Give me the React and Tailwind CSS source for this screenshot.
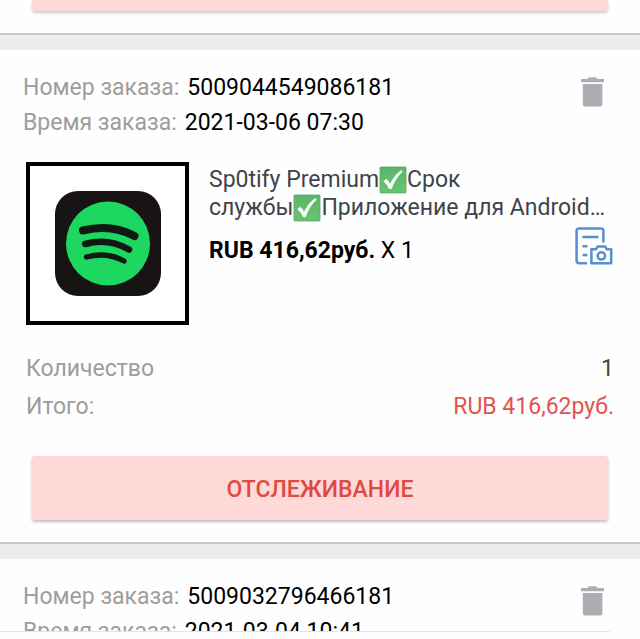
const orders = [
  {
    number: '5009044549086181',
    time: '2021-03-06 07:30',
    quantity: 1,
    price: 'RUB 416,62руб.',
  },
  {
    number: '5009032796466181',
    time: '2021-03-04 10:41',
    quantity: 1,
    price: 'RUB 416,62руб.',
  },
];

export default function App() {
  return (
    <div className="flex h-screen flex-col bg-[#fefefe] font-['Roboto','Noto_Sans',sans-serif] text-[23px] text-black">
      <main className="min-h-0 flex-1 overflow-hidden">
        <div className="border-b-2 border-[#c8c8c8] px-8 pb-[22px]">
          <div className="h-[11px] rounded-b-[3px] bg-[#fed9d7] shadow-[0_2px_3px_rgba(0,0,0,0.2)]" />
        </div>
        {orders.map((order) => (
          <OrderCard key={order.number} order={order} />
        ))}
      </main>
      <footer className="h-2 shrink-0 pr-[30px]">
        <div className="border-t border-[#e4e4e4]" />
      </footer>
    </div>
  );
}

function OrderCard({ order }) {
  return (
    <article className="border-b-2 border-[#c8c8c8]">
      <div className="h-[15px] bg-[#ececec]" />
      <header className="flex items-start justify-between pt-5 pr-9 pl-[23px] leading-[35px]">
        <div>
          <p className="flex gap-2">
            <span className="text-[#9d9d9d]">Номер заказа:</span>
            <span>{order.number}</span>
          </p>
          <p className="flex gap-2">
            <span className="text-[#9d9d9d]">Время заказа:</span>
            <span>{order.time}</span>
          </p>
        </div>
        <button type="button" aria-label="Удалить заказ" className="mt-[7px]">
          <TrashIcon />
        </button>
      </header>

      <div className="flex gap-5 pt-[22px] pr-[27px] pl-[26px]">
        <div className="grid size-[163px] shrink-0 place-items-center border-4 border-black bg-white">
          <SpotifyLogo />
        </div>
        <div className="min-w-0 flex-1 pt-1">
          <h2 className="leading-7 text-[#41434b]">
            Sp0tify Premium
            <CheckMark />
            Срок{' '}
            <span className="whitespace-nowrap">
              службы
              <CheckMark />
              Приложение
            </span>{' '}
            для Android…
          </h2>
          <div className="flex items-start justify-between pt-[5px]">
            <p className="pt-[6px] leading-[35px]">
              <strong className="font-bold">{order.price}</strong> X {order.quantity}
            </p>
            <button type="button" aria-label="Снимок заказа">
              <SnapshotIcon />
            </button>
          </div>
        </div>
      </div>

      <dl className="grid grid-cols-2 pt-[25px] pr-[26px] pl-[26px] leading-[38px]">
        <dt className="text-[#9d9d9d]">Количество</dt>
        <dd className="text-right text-[#41434b]">{order.quantity}</dd>
        <dt className="text-[#9d9d9d]">Итого:</dt>
        <dd className="text-right text-[#e25350]">{order.price}</dd>
      </dl>

      <div className="px-8 pt-[30px] pb-[22px]">
        <button
          type="button"
          className="h-16 w-full rounded-[3px] bg-[#fed9d7] pt-1 font-medium text-[#e04a41] shadow-[0_2px_3px_rgba(0,0,0,0.25)]"
        >
          ОТСЛЕЖИВАНИЕ
        </button>
      </div>
    </article>
  );
}

function CheckMark() {
  return (
    <svg viewBox="0 0 27 27" className="inline size-7 align-[-7px]" role="img" aria-label="✅">
      <defs>
        <linearGradient id="check-fill" x1="0" y1="0" x2="0" y2="1">
          <stop offset="0" stopColor="#5cb56a" />
          <stop offset="1" stopColor="#68c56e" />
        </linearGradient>
      </defs>
      <rect x="1" y="1" width="25" height="25" rx="0.8" fill="url(#check-fill)" stroke="#55a861" strokeWidth="0.8" />
      <path d="M4.2 14.8 7.2 12.4Q9.4 14.4 10.7 17.2 14.6 8.8 21.3 4.2L23 5.4Q16 11.6 12.2 22.2H9.6Q7.8 17.8 4.2 14.8Z" fill="#f8fcf8" />
    </svg>
  );
}

function TrashIcon() {
  return (
    <svg viewBox="0 0 23 30" className="h-[30px] w-[23px]" fill="#adaeb3">
      <path d="M0 2H6.5L8 0.3H15L16.5 2H23V5.2H0Z" />
      <path d="M1.8 7H21.4V26.4Q21.4 29.6 18.4 29.6H4.8Q1.8 29.6 1.8 26.4Z" />
    </svg>
  );
}

function SnapshotIcon() {
  return (
    <svg viewBox="0 0 38 38" className="size-[38px]" fill="none" stroke="#5590d0" strokeWidth="2.5">
      <path d="M12 36.2H4Q1.6 36.2 1.6 33.8V4Q1.6 1.6 4 1.6H26Q28.4 1.6 28.4 4V15.5" />
      <path d="M7.5 10H23.5M7.5 19.2H12.5M7.5 28H12.5" />
      <path d="M16.4 22.2H21L22.8 19.4H30L31.8 22.2H36.2V36.2H16.4Z" strokeLinejoin="round" />
      <circle cx="26.4" cy="28.9" r="3.7" />
    </svg>
  );
}

function SpotifyLogo() {
  return (
    <svg viewBox="0 0 106 106" className="size-[106px]" role="img" aria-label="Spotify">
      <rect width="106" height="105" rx="23" fill="#191414" />
      <circle cx="53" cy="52.5" r="42" fill="#1ed760" />
      <g fill="none" stroke="#101a13" strokeLinecap="round">
        <path d="M28 39.5Q56 32.5 79.5 45" strokeWidth="8" />
        <path d="M30.3 53Q53 46.5 74 58.5" strokeWidth="6.6" />
        <path d="M31.5 66Q52 60.5 69 70" strokeWidth="5.4" />
      </g>
    </svg>
  );
}
